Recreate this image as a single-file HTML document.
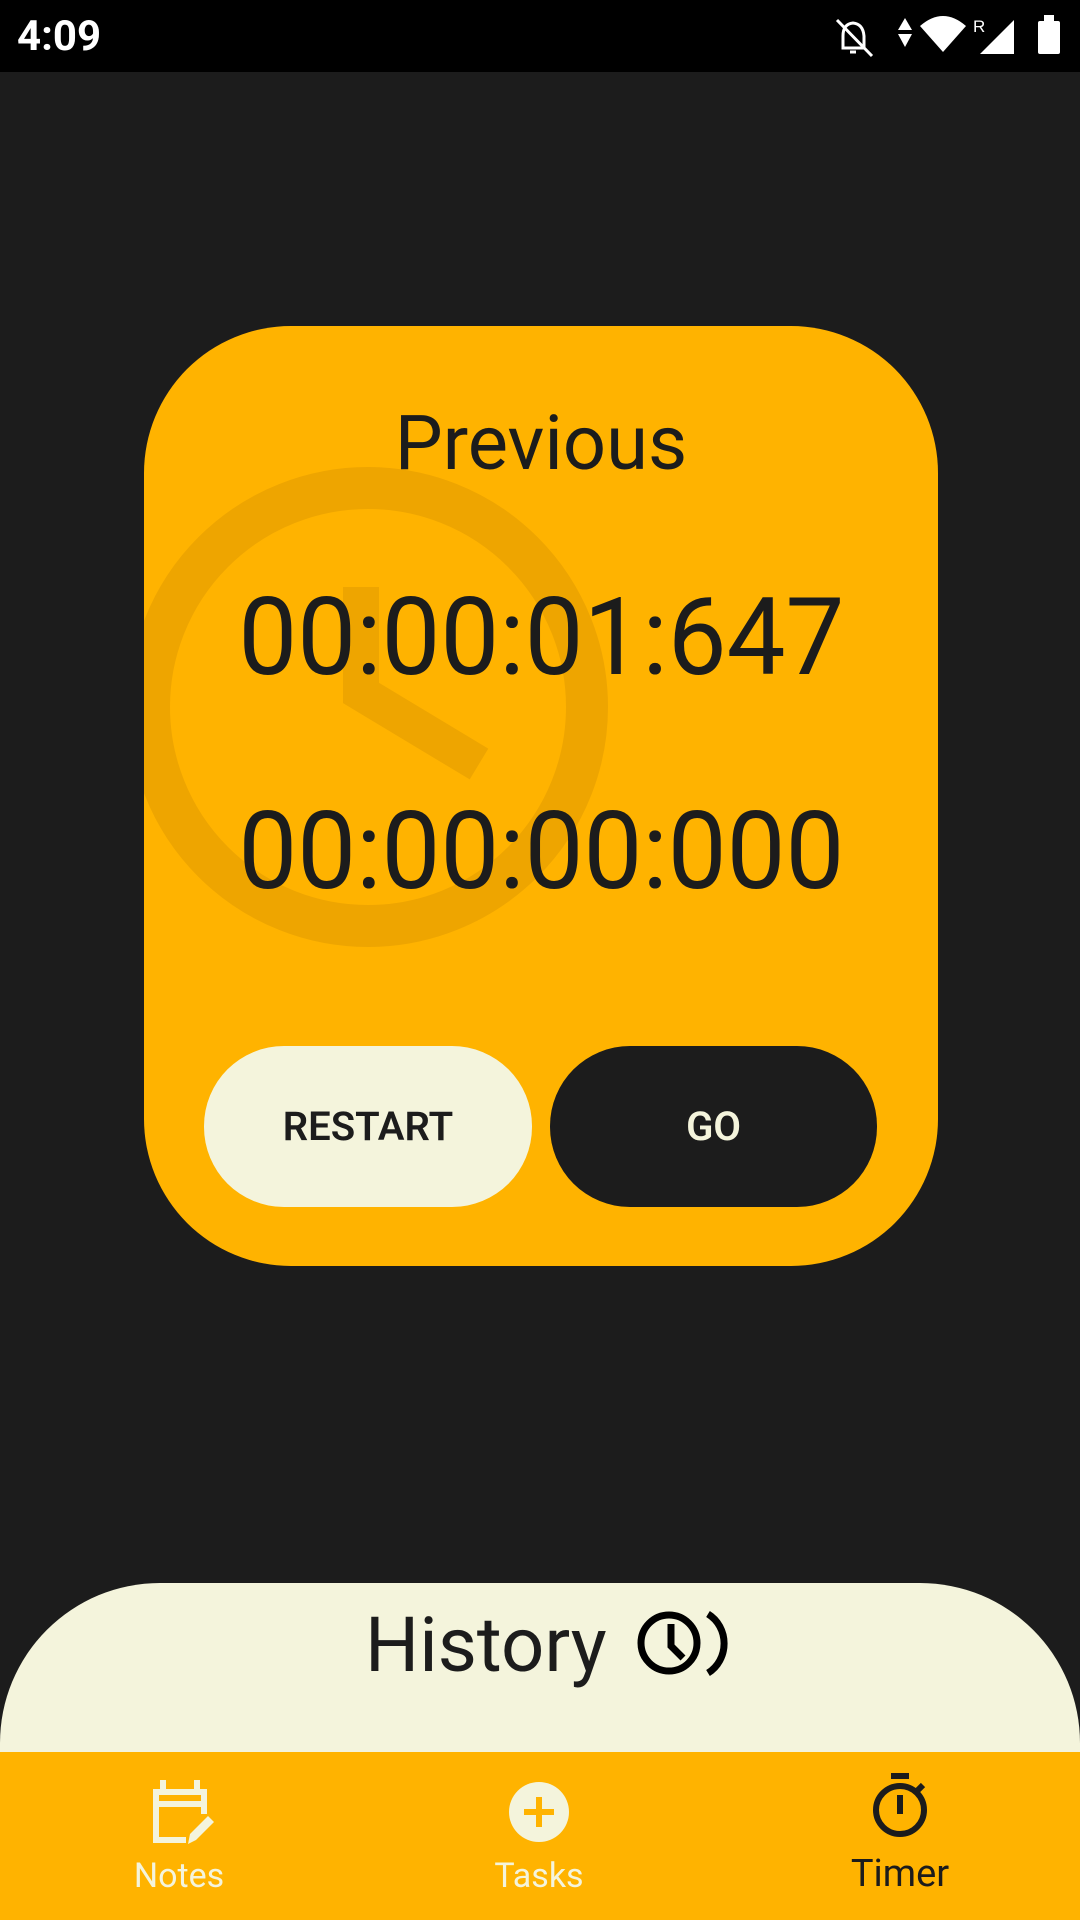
<!DOCTYPE html>
<html><head><meta charset="utf-8"><style>
html,body{margin:0;padding:0;}
html{height:1920px;overflow:hidden;}
body{width:1080px;height:1920px;background:#1c1c1c;position:relative;overflow:hidden;font-family:"Roboto","Liberation Sans",sans-serif;}
.abs{position:absolute;}
#status{left:0;top:0;width:1080px;height:72px;background:#000;}
#card{left:144px;top:326px;width:794px;height:940px;background:#FFB300;border-radius:147px;overflow:hidden;}
.t{position:absolute;left:0;width:794px;text-align:center;color:#1c1c1c;white-space:nowrap;}
.btn{position:absolute;top:720px;height:161px;width:328px;border-radius:80px;display:flex;align-items:center;justify-content:center;font-size:40px;font-weight:600;letter-spacing:0px;}
#hist{left:0;top:1583px;width:1080px;height:337px;background:#F4F4DC;border-radius:160px 160px 0 0;}
#nav{left:0;top:1752px;width:1080px;height:168px;background:#FFB300;}
.lbl{position:absolute;font-size:34px;text-align:center;width:200px;}
</style></head><body>
<div id="status" class="abs">
 <div class="abs" style="left:17px;top:12px;color:#fff;font-size:42px;font-weight:bold;">4:09</div>
 <svg class="abs" style="left:820px;top:10px" width="260" height="60" viewBox="820 10 260 60">
  <g fill="none" stroke="#fff" stroke-width="3">
   <path d="M843 48 L843 36 Q843 24 853 23 Q863 24 864 36 L864 48 Z"/>
   <path d="M837 20 L872 56"/>
   <path d="M850 52 h6"/>
  </g>
  <g fill="#fff">
   <path d="M905 18 L912 30 L898 30 Z"/><path d="M898 34 L912 34 L905 47 Z"/>
   <path d="M920 26 Q943 6 966 26 L943 52 Z"/>
   <text x="973" y="32" font-size="17" font-family="Liberation Sans" fill="#fff">R</text>
   <path d="M1014 20 L1014 54 L980 54 Z"/>
   <rect x="1038" y="21" width="22" height="33" rx="2"/>
   <rect x="1044" y="15" width="10" height="7"/>
  </g>
 </svg>
</div>

<div id="card" class="abs">
 <svg class="abs" style="left:0;top:0" width="794" height="940">
  <g stroke="#EEA500" fill="none">
   <circle cx="224" cy="381" r="219" stroke-width="42"/>
   <path d="M217 261 L217 367 L335 438" stroke-width="36"/>
  </g>
 </svg>
 <div class="t" style="top:72px;font-size:76px;line-height:90px;">Previous</div>
 <div class="t" style="top:252px;font-size:108px;line-height:120px;"><span style="display:inline-block;transform:scaleX(0.97)">00:00:01:647</span></div>
 <div class="t" style="top:466px;font-size:108px;line-height:120px;"><span style="display:inline-block;transform:scaleX(0.97)">00:00:00:000</span></div>
 <div class="btn" style="left:60px;background:#F4F4DC;color:#1c1c1c;">RESTART</div>
 <div class="btn" style="left:406px;width:327px;background:#1c1c1c;color:#F4F4DC;">GO</div>
</div>

<div id="hist" class="abs">
 <div class="abs" style="left:365px;top:12px;font-size:76px;line-height:100px;color:#1c1c1c;">History</div>
 <svg class="abs" style="left:620px;top:7px" width="120" height="100" viewBox="620 1590 120 100">
  <g fill="none" stroke="#000" stroke-width="7">
   <circle cx="669" cy="1643" r="28"/>
   <path d="M671 1624 L671 1646 L683 1658"/>
   <path d="M708 1614 A32 34 0 0 1 708 1673"/>
  </g>
 </svg>
</div>

<div id="nav" class="abs">
 <svg class="abs" style="left:0;top:0" width="1080" height="168" viewBox="0 1752 1080 168">
  <g fill="none" stroke="#F4F4DC" stroke-width="6">
   <path d="M186 1840 L156 1840 L156 1792 L204 1792 L204 1814"/>
   <path d="M156 1804 L204 1804"/>
   <path d="M163 1780 v10 M197 1780 v10"/>
  </g>
  <path d="M188 1844 L190 1834 L208 1816 L214 1822 L196 1840 Z" fill="#F4F4DC"/>
  <circle cx="539" cy="1812" r="30" fill="#F4F4DC"/>
  <path d="M539 1797 v30 M524 1812 h30" stroke="#FFB300" stroke-width="6"/>
  <g fill="none" stroke="#1c1c1c" stroke-width="6">
   <circle cx="900" cy="1810" r="24"/>
   <path d="M900 1795 v19" />
   <path d="M891 1776 h18"/>
   <path d="M917 1791 l6 -6"/>
  </g>
 </svg>
 <div class="lbl" style="left:79px;top:104px;color:#F4F4DC;">Notes</div>
 <div class="lbl" style="left:439px;top:104px;color:#F4F4DC;">Tasks</div>
 <div class="lbl" style="left:800px;top:100px;color:#1c1c1c;font-size:38px;">Timer</div>
</div>
</body></html>
